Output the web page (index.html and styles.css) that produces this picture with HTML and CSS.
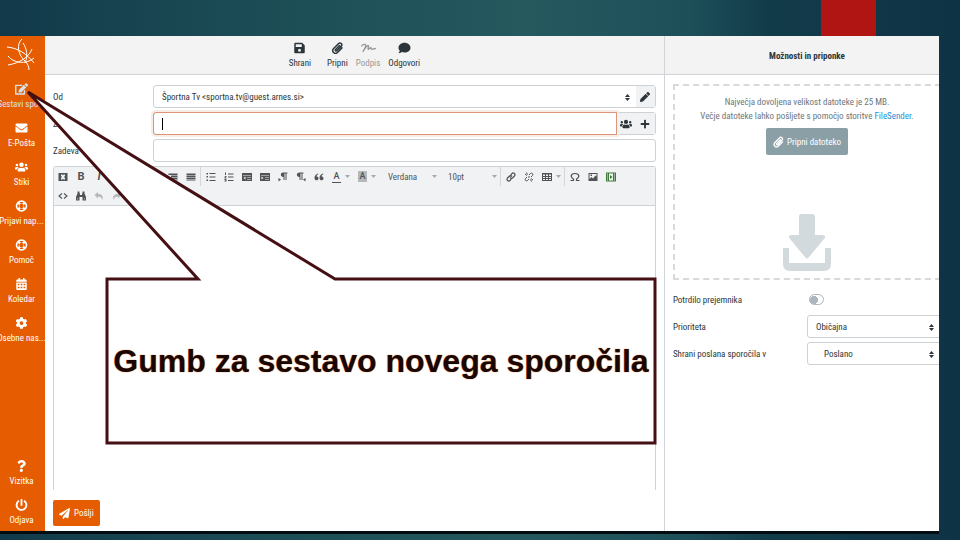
FILE: index.html
```
<!doctype html>
<html lang="sl">
<head>
<meta charset="utf-8">
<meta name="viewport" content="width=device-width, initial-scale=1.0">
<link rel="stylesheet" href="styles.css">
<title>Sestavi sporočilo</title>
</head>
<body>

<svg class="sprite" aria-hidden="true">
<symbol id="edit" viewBox="0 0 576 512"><path d="M402 84l90 90c4 4 4 10 0 14L274 406l-93 10c-12 2-23-9-21-21l10-93L388 84c4-4 10-4 14 0zm162-23l-49-49c-15-15-40-15-55 0l-35 35c-4 4-4 10 0 14l90 90c4 4 10 4 14 0l35-35c15-15 15-40 0-55zM384 346v102H64V128h230l40-40c8-8 2-24-10-24H48C22 64 0 86 0 112v352c0 26 22 48 48 48h352c26 0 48-22 48-48V306c0-10-14-16-24-10z"/></symbol>
<symbol id="mail" viewBox="0 0 512 512"><path d="M502 191c4-3 10 0 10 5v204c0 26-22 48-48 48H48c-26 0-48-22-48-48V196c0-5 6-8 10-5 22 17 52 40 154 114 21 15 57 48 92 48s72-33 92-48c102-74 132-97 154-114zM256 320c23 0 57-29 73-41 133-97 143-105 174-129 6-5 9-12 9-19v-19c0-26-22-48-48-48H48c-26 0-48 22-48 48v19c0 7 3 14 9 19 31 24 41 32 174 129 16 12 50 41 73 41z"/></symbol>
<symbol id="users" viewBox="0 0 640 512"><path d="M96 224a64 64 0 1 0 0-128 64 64 0 0 0 0 128zm448 0a64 64 0 1 0 0-128 64 64 0 0 0 0 128zm32 32h-64c-18 0-34 7-45 19 40 22 69 62 75 109h66c18 0 32-14 32-32v-32c0-35-29-64-64-64zm-256 0a112 112 0 1 0 0-224 112 112 0 0 0 0 224zm77 32h-8c-21 10-44 16-69 16s-48-6-69-16h-8c-64 0-115 51-115 115v29c0 26 22 48 48 48h288c26 0 48-22 48-48v-29c0-64-51-115-115-115zm-224-13c-11-12-27-19-45-19H64c-35 0-64 29-64 64v32c0 18 14 32 32 32h66c6-47 35-87 75-109z"/></symbol>
<symbol id="ring" viewBox="0 0 512 512"><path fill-rule="evenodd" d="M256 8a248 248 0 1 0 0 496 248 248 0 0 0 0-496zm0 154a94 94 0 1 1 0 188 94 94 0 0 1 0-188zM170 100l44 52c27-9 57-9 84 0l44-52c-54-26-118-26-172 0zm0 312c54 26 118 26 172 0l-44-52c-27 9-57 9-84 0zM100 170c-26 54-26 118 0 172l52-44c-9-27-9-57 0-84zm312 0l-52 44c9 27 9 57 0 84l52 44c26-54 26-118 0-172z"/></symbol>
<symbol id="calendar" viewBox="0 0 448 512"><path fill-rule="evenodd" d="M0 192h448v272c0 26-22 48-48 48H48c-26 0-48-22-48-48zm64 56v56h72v-56zm124 0v56h72v-56zm124 0v56h72v-56zM64 376v56h72v-56zm124 0v56h72v-56zm124 0v56h72v-56zM448 160H0v-48c0-26 22-48 48-48h48V12c0-7 5-12 12-12h40c7 0 12 5 12 12v52h128V12c0-7 5-12 12-12h40c7 0 12 5 12 12v52h48c26 0 48 22 48 48z"/></symbol>
<symbol id="gear" viewBox="0 0 512 512"><path fill-rule="evenodd" d="M487 316l-42-25c4-23 4-47 0-70l42-25c5-3 8-9 6-14-12-36-31-68-56-95-4-4-10-5-15-2l-43 24c-18-15-38-27-60-35V25c0-6-4-11-10-12-36-8-74-8-111 0-6 1-9 6-9 12v49c-23 8-43 20-61 35L86 85c-5-3-11-2-15 2-25 27-44 59-56 95-1 5 1 11 6 14l43 25c-5 23-5 47 0 70l-43 25c-5 3-7 9-6 14 12 36 31 68 56 95 4 4 10 5 15 2l42-24c18 15 38 27 61 35v49c0 6 3 11 9 12 37 8 75 8 111 0 6-1 10-6 10-12v-49c22-8 42-20 60-35l43 24c5 3 11 2 15-2 25-27 44-59 56-95 2-5-1-11-6-14zm-231 20a80 80 0 1 1 0-160 80 80 0 0 1 0 160z"/></symbol>
<symbol id="question" viewBox="0 0 384 512"><path d="M202 0C122 0 70 33 30 91c-8 11-5 25 5 33l43 32c10 8 25 6 33-4 26-31 44-49 82-49 30 0 67 19 67 48 0 22-18 33-47 49-35 19-80 44-80 104v10c0 13 11 24 24 24h72c13 0 24-11 24-24v-6c0-42 122-44 122-157C375 66 287 0 202 0zM192 373a70 70 0 1 0 0 139 70 70 0 0 0 0-139z"/></symbol>
<symbol id="power" viewBox="0 0 512 512"><path d="M400 54c63 45 104 118 104 201a248 248 0 1 1-392-201c11-8 27-5 34 7l16 28c6 11 3 24-7 32a168 168 0 1 0 202 0c-10-7-13-21-7-31l16-28c7-12 23-16 34-8zM296 264V24c0-13-11-24-24-24h-32c-13 0-24 11-24 24v240c0 13 11 24 24 24h32c13 0 24-11 24-24z"/></symbol>
<symbol id="save" viewBox="0 0 448 512"><path fill-rule="evenodd" d="M434 130l-84-84c-9-9-21-14-34-14H48C22 32 0 54 0 80v352c0 26 22 48 48 48h352c26 0 48-22 48-48V164c0-13-5-25-14-34zM64 96h256v112H64zm160 320a64 64 0 1 1 0-128 64 64 0 0 1 0 128z"/></symbol>
<symbol id="clip" viewBox="0 0 512 512"><path fill="none" stroke="currentColor" stroke-width="64" stroke-linecap="round" d="M340 150L175 320c-34 36 14 84 50 50l190-194c76-78-34-190-112-112L92 280C-20 398 142 558 256 446l190-196"/></symbol>
<symbol id="sign" viewBox="0 0 640 400"><path fill="none" stroke="currentColor" stroke-width="60" stroke-linecap="round" stroke-linejoin="round" d="M30 110c60-80 170-90 170-10S110 280 90 350C150 240 220 120 300 90c60 0-30 160 10 170s60-80 110-70c30 10 0 60 50 60s60-20 140-30"/></symbol>
<symbol id="comment" viewBox="0 0 512 512"><path d="M256 32C115 32 0 125 0 240c0 50 21 95 57 131-13 50-54 95-55 95-2 2-3 6-1 9 1 3 4 5 7 5 66 0 116-32 141-51 32 12 69 19 107 19 141 0 256-93 256-208S397 32 256 32z"/></symbol>
<symbol id="pencil" viewBox="0 0 512 512"><path d="M498 142l-47 46c-4 5-12 5-17 0L324 78c-5-5-5-13 0-17l46-47c19-19 50-19 68 0l60 60c19 18 19 49 0 68zM284 101L22 363 0 485c-3 16 12 30 28 27l122-21 261-263c5-4 5-12 0-17L301 101c-5-5-13-5-17 0z"/></symbol>
<symbol id="plus" viewBox="0 0 448 512"><path d="M416 208H272V64c0-18-14-32-32-32h-32c-18 0-32 14-32 32v144H32c-18 0-32 14-32 32v32c0 18 14 32 32 32h144v144c0 18 14 32 32 32h32c18 0 32-14 32-32V304h144c18 0 32-14 32-32v-32c0-18-14-32-32-32z"/></symbol>
<symbol id="plane" viewBox="0 0 512 512"><path d="M476 3L13 270c-18 10-16 35 1 43l106 44L407 105c6-5 13 3 9 8L175 406v80c0 24 28 33 42 16l64-77 124 52c15 6 31-3 34-18l72-432c3-20-18-34-35-24z"/></symbol>
<symbol id="sort" viewBox="0 0 10 14"><path d="M0 6l5-6 5 6zM0 8h10l-5 6z"/></symbol>
<symbol id="caret" viewBox="0 0 10 6"><path d="M0 0h10L5 6z"/></symbol>
<symbol id="plain" viewBox="0 0 20 20"><path fill-rule="evenodd" d="M1 2h18v16H1zm5 3v3l2 2-2 2v3h3l1-2 1 2h3v-3l-2-2 2-2V5h-3l-1 2-1-2z"/></symbol>
<symbol id="lines" viewBox="0 0 20 20"><path d="M1 3h18v3H1zm0 4h18v3H1zm0 4h18v3H1zm0 4h18v2H1z"/></symbol>
<symbol id="linesr" viewBox="0 0 20 20"><path d="M1 3h18v3H1zm5 4h13v3H6zm-5 4h18v3H1zm5 4h13v2H6z"/></symbol>
<symbol id="ul" viewBox="0 0 20 20"><path d="M1 2h3v3H1zm6 0h12v2H7zM1 8h3v3H1zm6 1h12v2H7zM1 15h3v3H1zm6 1h12v2H7z"/></symbol>
<symbol id="ol" viewBox="0 0 20 20"><path d="M2 1h2v5H2zm6 2h11v2H8zM1 8h4v2L3 12h2v1H1v-2l2-2H1zm7 1h11v2H8zM1 14h4v5H1v-1h2v-1H1zm7 2h11v2H8z"/></symbol>
<symbol id="outdent" viewBox="0 0 20 20"><path fill-rule="evenodd" d="M0 2h20v16H0zm2 5v1h16V7zm8 4v1h8v-1zM7 9v6l-4-3zm3 5v1h8v-1z"/></symbol>
<symbol id="indent" viewBox="0 0 20 20"><path fill-rule="evenodd" d="M0 2h20v16H0zm2 5v1h16V7zm8 4v1h8v-1zM3 9v6l4-3zm7 5v1h8v-1z"/></symbol>
<symbol id="ltr" viewBox="0 0 20 20"><path d="M10 1h9v2h-2v13h-2V3h-2v13h-2v-6C4 10 4 1 10 1zM1 12l5 3-5 4z"/></symbol>
<symbol id="rtl" viewBox="0 0 20 20"><path d="M7 1h8v2h-2v13h-2V3H9v13H7v-6C0 10 0 1 7 1zm12 11v7l-5-4z"/></symbol>
<symbol id="quote" viewBox="0 0 20 20"><path d="M8 3C3 5 1 8 1 12c0 6 8 6 8 1 0-3-2-4-4-4 0-2 2-4 4-5zm10 0c-5 2-7 5-7 9 0 6 8 6 8 1 0-3-2-4-4-4 0-2 2-4 4-5z"/></symbol>
<symbol id="link" viewBox="0 0 20 20"><path fill="none" stroke="currentColor" stroke-width="2.4" d="M9 7l3-4c3-3 8 1 5 5l-3 3c-2 2-4 2-6 0M11 13l-3 4c-3 3-8-1-5-5l3-3c2-2 4-2 6 0"/></symbol>
<symbol id="unlink" viewBox="0 0 20 20"><path fill="none" stroke="currentColor" stroke-width="2" d="M10 6l3-3c3-2 6 1 4 4l-3 3M10 14l-3 3c-3 2-6-1-4-4l3-3M2 4l4 3M5 1l2 4M18 16l-4-3M15 19l-2-4M8 10h4"/></symbol>
<symbol id="table" viewBox="0 0 20 20"><path fill-rule="evenodd" d="M0 2h20v16H0zm2 3v3h4V5zm6 0v3h4V5zm6 0v3h4V5zM2 10v2h4v-2zm6 0v2h4v-2zm6 0v2h4v-2zM2 14v2h4v-2zm6 0v2h4v-2zm6 0v2h4v-2z"/></symbol>
<symbol id="omega" viewBox="0 0 20 20"><path fill="none" stroke="currentColor" stroke-width="2.4" d="M1 17h6v-3C0 10 1 3 10 3s10 7 3 11v3h6"/></symbol>
<symbol id="image" viewBox="0 0 20 20"><path fill-rule="evenodd" d="M1 2h18v16H1zm2 2v10l4-4 3 3 5-6 2 2V4zm2 1h3v3H5z"/></symbol>
<symbol id="media" viewBox="0 0 20 20"><path fill-rule="evenodd" d="M0 1h20v18H0zm2 2v2h2V3zm0 4v2h2V7zm0 4v2h2v-2zm0 4v2h2v-2zM16 3v2h2V3zm0 4v2h2V7zm0 4v2h2v-2zm0 4v2h2v-2zM6 3v14h8V3zm2 3l5 4-5 4z"/></symbol>
<symbol id="code" viewBox="0 0 20 20"><path fill="none" stroke="currentColor" stroke-width="2.2" d="M8 5l-6 5 6 5M12 5l6 5-6 5"/></symbol>
<symbol id="find" viewBox="0 0 20 20"><path fill-rule="evenodd" d="M3 1h4v4h1v3h4V5h1V1h4v4l3 7v7h-7v-7H7v7H0v-7l3-7zM2 14v3h1v-3zm15 0v3h1v-3z"/></symbol>
<symbol id="undo" viewBox="0 0 20 20"><path d="M8 2v4c8 0 12 5 8 12 0-5-3-7-8-7v4L1 8z"/></symbol>
<symbol id="redo" viewBox="0 0 20 20"><path d="M12 2v4C4 6 0 11 4 18c0-5 3-7 8-7v4l7-7z"/></symbol>
</svg>

<div class="ribbon"></div>

<div class="app">
<nav class="menu">
<svg class="logo" viewBox="0 0 30 34"><path d="M1 9c11 1 20 7 27 16M16 1c-6 5-4 16 3 22 3 3 4 6 4 9M26 11c-3 8-12 14-24 16M17 5c4 6 5 13 2 20M2 18c5 7 18 9 26 2"/></svg>
<a class="active" href="#"><svg><use href="#edit"/></svg><span>Sestavi spo...</span></a>
<a href="#"><svg><use href="#mail"/></svg><span>E-Pošta</span></a>
<a href="#"><svg><use href="#users"/></svg><span>Stiki</span></a>
<a href="#"><svg><use href="#ring"/></svg><span>Prijavi nap...</span></a>
<a href="#"><svg><use href="#ring"/></svg><span>Pomoč</span></a>
<a href="#"><svg><use href="#calendar"/></svg><span>Koledar</span></a>
<a href="#"><svg><use href="#gear"/></svg><span>Osebne nas...</span></a>
<a class="last" href="#"><svg><use href="#question"/></svg><span>Vizitka</span></a>
<a href="#"><svg><use href="#power"/></svg><span>Odjava</span></a>
</nav>

<main class="compose">
<header class="bar">
<button class="save"><svg><use href="#save"/></svg>Shrani</button>
<button><svg><use href="#clip"/></svg>Pripni</button>
<button disabled><svg><use href="#sign"/></svg>Podpis</button>
<button><svg><use href="#comment"/></svg>Odgovori</button>
</header>

<form class="form">
<div class="row">
<label for="from">Od</label>
<div class="field">
<div class="pick"><select id="from"><option>Športna Tv &lt;sportna.tv@guest.arnes.si&gt;</option></select><svg class="sort"><use href="#sort"/></svg></div>
<button type="button" class="addon" aria-label="Uredi"><svg><use href="#pencil"/></svg></button>
</div>
</div>
<div class="row">
<label for="to">Za</label>
<div class="field focus">
<input id="to" type="text"><i class="cursor"></i>
<button type="button" class="addon" aria-label="Stiki"><svg><use href="#users"/></svg></button>
<button type="button" class="addon" aria-label="Dodaj"><svg><use href="#plus"/></svg></button>
</div>
</div>
<div class="row">
<label for="subject">Zadeva</label>
<div class="field"><input id="subject" type="text"></div>
</div>

<div class="editor">
<div class="tools">
<div class="line">
<button type="button"><svg><use href="#plain"/></svg></button>
<button type="button"><b>B</b></button>
<button type="button"><b><em>I</em></b></button>
<button type="button"><u>U</u></button>
<i class="sep"></i>
<button type="button"><svg><use href="#lines"/></svg></button>
<button type="button"><svg><use href="#lines"/></svg></button>
<button type="button"><svg><use href="#linesr"/></svg></button>
<button type="button"><svg><use href="#lines"/></svg></button>
<i class="sep"></i>
<button type="button"><svg><use href="#ul"/></svg></button>
<button type="button"><svg><use href="#ol"/></svg></button>
<button type="button"><svg><use href="#outdent"/></svg></button>
<button type="button"><svg><use href="#indent"/></svg></button>
<button type="button"><svg><use href="#ltr"/></svg></button>
<button type="button"><svg><use href="#rtl"/></svg></button>
<button type="button"><svg><use href="#quote"/></svg></button>
<button type="button" class="split"><span class="fore">A</span><svg class="caret"><use href="#caret"/></svg></button>
<button type="button" class="split"><span class="back">A</span><svg class="caret"><use href="#caret"/></svg></button>
<div class="choice"><select aria-label="Pisava"><option>Verdana</option></select><svg class="caret"><use href="#caret"/></svg></div>
<div class="choice"><select aria-label="Velikost"><option>10pt</option></select><svg class="caret"><use href="#caret"/></svg></div>
<i class="sep"></i>
<button type="button"><svg><use href="#link"/></svg></button>
<button type="button"><svg><use href="#unlink"/></svg></button>
<button type="button" class="split"><svg><use href="#table"/></svg><svg class="caret"><use href="#caret"/></svg></button>
<i class="sep"></i>
<button type="button"><svg><use href="#omega"/></svg></button>
<button type="button"><svg><use href="#image"/></svg></button>
<button type="button" class="green"><svg><use href="#media"/></svg></button>
</div>
<div class="line">
<button type="button"><svg><use href="#code"/></svg></button>
<button type="button"><svg><use href="#find"/></svg></button>
<button type="button" disabled><svg><use href="#undo"/></svg></button>
<button type="button" disabled><svg><use href="#redo"/></svg></button>
</div>
</div>
<textarea aria-label="Sporočilo"></textarea>
</div>

<button type="button" class="send"><svg><use href="#plane"/></svg>Pošlji</button>
</form>
</main>

<aside class="options">
<header class="bar"><h2>Možnosti in priponke</h2></header>
<div class="inner">
<div class="drop">
<p>Največja dovoljena velikost datoteke je 25 MB.</p>
<p>Večje datoteke lahko pošljete s pomočjo storitve <a href="#">FileSender</a>.</p>
<button class="attach"><svg><use href="#clip"/></svg>Pripni datoteko</button>
<svg class="download" viewBox="0 0 50 57"><path d="M19 0h11q3 0 3 3v18h8q4 1 1 4L27 43q-2 3-4 0L8 25q-3-3 1-4h8V3q0-3 2-3zM1 34h6v15h36V34h6v16q0 7-7 7H8q-7 0-7-7z"/></svg>
</div>
<div class="opt"><label for="receipt">Potrdilo prejemnika</label><input id="receipt" type="checkbox"></div>
<div class="opt"><label for="priority">Prioriteta</label><div class="pick"><select id="priority"><option>Običajna</option></select><svg class="sort"><use href="#sort"/></svg></div></div>
<div class="opt"><label for="folder">Shrani poslana sporočila v</label><div class="pick folder"><select id="folder"><option>Poslano</option></select><svg class="sort"><use href="#sort"/></svg></div></div>
</div>
</aside>
</div>

<div class="callout">
<svg viewBox="0 0 632 356"><path d="M2 3L172 190H81V354H629V190H309Z"/></svg>
<p>Gumb za sestavo novega sporočila</p>
</div>

</body>
</html>
```
FILE: styles.css
```
* {
	box-sizing: border-box;
}
body {
	display: flex;
	flex-direction: column;
	position: relative;
	min-height: 100vh;
	margin: 0;
	padding: 0 21px 6px 0;
	overflow-x: hidden;
	font-family: "Roboto Condensed", Roboto, "Liberation Sans", sans-serif;
	font-size: 9px;
	line-height: 14px;
	color: #2c363a;
	background: linear-gradient(90deg, #12394a 0%, #1b4c55 25%, #25595e 55%, #1d4f59 72%, #123b4a 80%, #0e3345 100%);
}
p, h2 {
	margin: 0;
}
a {
	color: #1d8fd8;
	text-decoration: none;
}
button, input, select, textarea {
	margin: 0;
	padding: 0;
	border: 0;
	font: inherit;
	color: inherit;
	background: none;
	appearance: none;
	outline: none;
}
svg {
	display: block;
	fill: currentColor;
}
.sprite {
	position: absolute;
	width: 0;
	height: 0;
}
.ribbon {
	align-self: flex-end;
	width: 55px;
	height: 36px;
	margin-right: 63px;
	background: #b01513;
}
.app {
	display: grid;
	grid-template-columns: 45px 9fr 4fr;
	flex: 1;
	background: #fff;
	border-bottom: 3px solid #020d12;
}

/* left menu */
.menu {
	display: flex;
	flex-direction: column;
	min-width: 0;
	padding-bottom: 2px;
	overflow: hidden;
	color: #fff;
	background: #e65c00;
}
.menu .logo {
	width: 30px;
	height: 34px;
	margin: 2px 6px 8px;
	fill: none;
	stroke: #fff;
}
.menu a {
	display: flex;
	flex-direction: column;
	align-items: center;
	height: 39px;
	padding: 3px 2px 0 0;
	color: #fff;
	white-space: nowrap;
}
.menu a svg {
	flex: none;
	width: 13px;
	height: 12px;
	margin-bottom: 2px;
}
.menu .active {
	color: #d5e3ee;
}
.menu .last {
	margin-top: auto;
}
.menu a:last-child {
	height: 33px;
}

.bar {
	display: flex;
	justify-content: center;
	align-items: center;
	gap: 8px;
	height: 39px;
	padding-top: 2px;
	background: #f3f3f3;
	border-bottom: 1px solid #d0d4d8;
}
.bar button {
	display: flex;
	flex-direction: column;
	align-items: center;
	gap: 2px;
}
.bar svg {
	width: 15px;
	height: 12px;
}
.bar .save {
	margin-right: 8px;
}
.bar button:disabled {
	color: #999;
}
.bar h2 {
	font-size: 9px;
	font-weight: bold;
}

/* message form */
.compose {
	display: flex;
	flex-direction: column;
	min-width: 0;
}
.form {
	display: flex;
	flex-direction: column;
	flex: 1;
	gap: 4px;
	padding: 10px 8px 5px;
}
.row {
	display: flex;
	align-items: center;
}
.row label {
	width: 100px;
}
.field {
	position: relative;
	display: flex;
	flex: 1;
	height: 23px;
	border: 1px solid #ccd2d6;
	border-radius: 3px;
}
.field input, .pick {
	flex: 1;
}
.field input {
	min-width: 0;
	padding: 0 8px;
}
.field.focus input {
	margin: -1px 0 -1px -1px;
	border: 1px solid #dd9478;
	border-radius: 3px 0 0 3px;
	box-shadow: 0 0 0 2px #f8ece7;
}
.cursor {
	position: absolute;
	top: 5px;
	left: 8px;
	height: 12px;
	border-left: 1px solid #000;
}
.pick {
	position: relative;
}
.pick select {
	width: 100%;
	height: 100%;
	padding: 0 8px;
}
.sort {
	position: absolute;
	top: 50%;
	right: 6px;
	width: 5px;
	height: 7px;
	margin-top: -3px;
}
.addon {
	display: flex;
	justify-content: center;
	align-items: center;
	width: 19px;
	background: #f0f2f4;
}
.addon svg {
	width: 12px;
	height: 10px;
}

.editor {
	display: flex;
	flex-direction: column;
	flex: 1;
	border: 1px solid #ccd2d6;
	border-bottom: 0;
	border-radius: 3px 3px 0 0;
}
.tools {
	background: #f0f2f4;
	border-bottom: 1px solid #ccd2d6;
	color: #505457;
}
.line {
	display: flex;
	height: 19px;
}
.line button {
	display: flex;
	flex: none;
	justify-content: center;
	align-items: center;
	width: 18px;
	font-family: Roboto, sans-serif;
	font-size: 11px;
}
.line button svg {
	width: 10px;
	height: 10px;
}
.line .split {
	gap: 4px;
	width: 26px;
}
.line button:disabled {
	color: #b5b8ba;
}
.line svg.caret {
	width: 5px;
	height: 3px;
	color: #a5a9ac;
}
.line .green {
	color: #3c7a3c;
}
.sep {
	width: 2px;
	border-left: 1px solid #d3d7da;
}
.fore, .back {
	width: 9px;
	font-size: 9px;
	font-weight: 500;
	line-height: 11px;
}
.fore {
	border-bottom: 1px solid #505457;
}
.back {
	background: #b5b7b9;
}
.choice {
	display: flex;
	align-items: center;
	width: 60px;
	padding: 0 3px 0 8px;
}
.choice select {
	flex: 1;
	min-width: 0;
}
.editor textarea {
	flex: 1;
	resize: none;
}
.send {
	display: flex;
	align-self: flex-start;
	align-items: center;
	gap: 4px;
	height: 26px;
	margin-top: 6px;
	padding: 0 6px;
	color: #fff;
	background: #e65c00;
	border-radius: 2px;
}
.send svg {
	width: 11px;
	height: 11px;
}

/* options and attachments */
.options {
	min-width: 0;
	overflow: hidden;
	border-left: 1px solid #d0d4d8;
}
.options .bar {
	padding-left: 10px;
}
.inner {
	margin: 9px -2px 0 8px;
}
.drop {
	display: flex;
	flex-direction: column;
	align-items: center;
	height: 196px;
	padding-top: 9px;
	border: 2px dashed #d9d9d9;
	color: #6c757d;
	white-space: nowrap;
}
.attach {
	display: flex;
	justify-content: center;
	align-items: center;
	gap: 3px;
	width: 82px;
	height: 27px;
	margin-top: 5px;
	color: #fff;
	background: #8b9fa7;
	border-radius: 2px;
}
.attach svg {
	width: 11px;
	height: 12px;
}
.download {
	width: 50px;
	height: 57px;
	margin-top: auto;
	margin-bottom: 7px;
	color: #d3dade;
}
.opt {
	display: flex;
	align-items: center;
	height: 23px;
	margin-top: 4px;
}
.drop + .opt {
	margin-top: 8px;
}
.opt label {
	flex: 1;
}
.opt .pick {
	width: 50%;
	flex: none;
	height: 23px;
	border: 1px solid #ccd2d6;
	border-radius: 3px;
}
.opt .folder select {
	padding-left: 16px;
}
.opt input {
	width: 15px;
	height: 11px;
	margin-right: 117px;
	border: 1px solid #adb5bd;
	border-radius: 6px;
	background: radial-gradient(circle at 4px 5px, #adb5bd 4px, #fff 4px);
}

/* hint over the compose button */
.callout {
	position: absolute;
	top: 89px;
	left: 26px;
	width: 632px;
	height: 356px;
	pointer-events: none;
}
.callout svg {
	fill: #fff;
	stroke: #451014;
	stroke-width: 3px;
}
.callout p {
	position: absolute;
	top: 190px;
	left: 81px;
	width: 548px;
	font: bold 32px/164px "Liberation Sans", Arial, sans-serif;
	color: #190606;
	text-align: center;
	white-space: nowrap;
	text-shadow: 0 0 1px #e08a4a, 0 0 1px #e08a4a;
}
```
